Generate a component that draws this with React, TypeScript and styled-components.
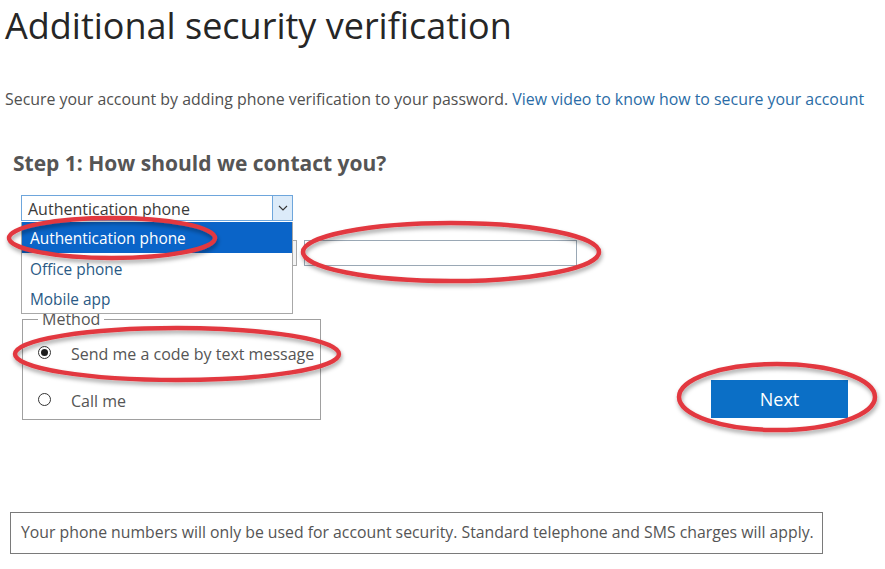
import React from "react";
import styled, { createGlobalStyle } from "styled-components";

const GlobalStyle = createGlobalStyle`
  html, body { margin: 0; padding: 0; background: #ffffff; }
  body { font-family: "Open Sans", "Noto Sans", sans-serif; }
  * { box-sizing: border-box; }
`;

const Page = styled.div`
  position: relative;
  width: 885px;
  height: 569px;
  overflow: hidden;
  background: #ffffff;
`;

const Title = styled.h1`
  margin: 0;
  padding-left: 5px;
  font: 400 36px/52px "Open Sans", sans-serif;
  color: #262626;
  white-space: nowrap;
`;

const Intro = styled.p`
  margin: 37px 0 0;
  padding-left: 5px;
  font: 400 15.9px/20px "Open Sans", sans-serif;
  color: #505050;
  white-space: nowrap;
`;

const Link = styled.a`
  color: #2a6ca6;
  text-decoration: none;
`;

const StepHeading = styled.h2`
  margin: 40px 0 0;
  padding-left: 13px;
  font: 700 21px/28px "Open Sans", sans-serif;
  color: #555555;
  white-space: nowrap;
`;

const Form = styled.div`
  margin-top: 18px;
  padding-left: 21px;
  display: flex;
  flex-direction: column;
`;

const SelectBox = styled.div`
  position: relative;
  width: 272px;
  height: 26px;
  border: 1px solid #6ea6dc;
  display: flex;
  align-items: stretch;
  background: #fff;
  z-index: 3;
`;

const SelectText = styled.span`
  flex: 1;
  padding: 2px 0 0 6px;
  font: 400 16px/22px "Open Sans", sans-serif;
  color: #3a3a3a;
  white-space: nowrap;
  overflow: hidden;
`;

const ArrowBox = styled.span`
  width: 20px;
  display: flex;
  align-items: center;
  justify-content: center;
  background: #dcebf9;
  border-left: 1px solid #6ea6dc;
`;

const Dropdown = styled.ul`
  position: absolute;
  top: 26px;
  left: -1px;
  width: 272px;
  margin: 0;
  padding: 0;
  list-style: none;
  background: #ffffff;
  border: 1px solid #a8a8a8;
  border-top: none;
`;

const Option = styled.li<{ $active?: boolean }>`
  height: ${(p) => (p.$active ? "31px" : "30px")};
  display: flex;
  align-items: center;
  padding: 3px 0 0 8px;
  font: 400 15.4px/1 "Open Sans", sans-serif;
  color: ${(p) => (p.$active ? "#ffffff" : "#2a5a85")};
  background: ${(p) => (p.$active ? "#0a64c8" : "transparent")};
  white-space: nowrap;
`;

const PhoneRow = styled.div`
  margin-top: 19px;
  display: flex;
  gap: 7px;
`;

const CountrySelect = styled.div`
  width: 276px;
  height: 26px;
  border: 1px solid #a9a9a9;
  background: #f4f4f4;
`;

const PhoneInput = styled.input`
  width: 273px;
  height: 26px;
  margin: 0;
  border: 1px solid #9aa8b5;
  background: #ffffff;
  padding: 0 6px;
  font: 400 15px "Open Sans", sans-serif;
  outline: none;
`;

const MethodRow = styled.div`
  margin-top: 45px;
  width: 827px;
  display: flex;
  align-items: flex-end;
`;

const Fieldset = styled.fieldset`
  margin: 0 0 0 1px;
  padding: 0 0 0 15px;
  width: 299px;
  min-width: 0;
  border: 1px solid #a0a0a0;
`;

const Legend = styled.legend`
  padding: 0 4px;
  font: 400 16px/16px "Open Sans", sans-serif;
  color: #555555;
`;

const RadioRow = styled.label<{ $first?: boolean }>`
  height: 40px;
  margin-top: ${(p) => (p.$first ? "5px" : "7px")};
  display: flex;
  align-items: center;
`;

const Radio = styled.span<{ $checked?: boolean }>`
  width: 13px;
  height: 13px;
  border-radius: 50%;
  border: 1px solid #333333;
  display: grid;
  place-items: center;
  background: #fff;
  &::after {
    content: "";
    width: 7px;
    height: 7px;
    border-radius: 50%;
    background: #1e1e1e;
    display: ${(p) => (p.$checked ? "block" : "none")};
  }
`;

const RadioLabel = styled.span`
  margin-left: 20px;
  padding-top: 3px;
  font: 400 16px/1 "Open Sans", sans-serif;
  color: #555555;
  white-space: nowrap;
`;

const NextButton = styled.button`
  margin: 0 0 2px auto;
  width: 137px;
  height: 38px;
  border: none;
  background: #0b6fc6;
  color: #ffffff;
  font: 400 18px/1 "Open Sans", sans-serif;
  padding: 0;
`;

const Notice = styled.div`
  margin: 92px 0 0 10px;
  width: 813px;
  height: 42px;
  border: 1px solid #7a7a7a;
  padding-left: 10px;
  display: flex;
  align-items: center;
  font: 400 15.8px/1 "Open Sans", sans-serif;
  color: #555555;
  white-space: nowrap;
`;

const Annotations = styled.svg`
  position: absolute;
  left: 0;
  top: 0;
  width: 885px;
  height: 569px;
  pointer-events: none;
  z-index: 10;
  overflow: visible;
`;

const marks = [
  { cx: 112, cy: 238, rx: 103, ry: 20 },
  { cx: 451, cy: 252, rx: 148, ry: 29 },
  { cx: 177, cy: 354, rx: 162, ry: 26 },
  { cx: 777, cy: 397, rx: 98, ry: 33 },
];

export default function App() {
  return (
    <>
      <GlobalStyle />
      <Page>
        <Title>Additional security verification</Title>
        <Intro>
          Secure your account by adding phone verification to your password.{" "}
          <Link href="#">View video to know how to secure your account</Link>
        </Intro>
        <StepHeading>Step 1: How should we contact you?</StepHeading>
        <Form>
          <SelectBox>
            <SelectText>Authentication phone</SelectText>
            <ArrowBox>
              <svg width="10" height="6" viewBox="0 0 10 6">
                <path d="M1 1l4 4 4-4" fill="none" stroke="#333" strokeWidth="1.1" />
              </svg>
            </ArrowBox>
            <Dropdown>
              <Option $active>Authentication phone</Option>
              <Option>Office phone</Option>
              <Option>Mobile app</Option>
            </Dropdown>
          </SelectBox>
          <PhoneRow>
            <CountrySelect />
            <PhoneInput type="text" />
          </PhoneRow>
          <MethodRow>
            <Fieldset>
              <Legend>Method</Legend>
              <RadioRow $first>
                <Radio $checked />
                <RadioLabel>Send me a code by text message</RadioLabel>
              </RadioRow>
              <RadioRow>
                <Radio />
                <RadioLabel>Call me</RadioLabel>
              </RadioRow>
            </Fieldset>
            <NextButton>Next</NextButton>
          </MethodRow>
        </Form>
        <Notice>
          Your phone numbers will only be used for account security. Standard telephone and SMS charges will apply.
        </Notice>
        <Annotations viewBox="0 0 885 569">
          <defs>
            <filter id="shadow" x="-10%" y="-30%" width="120%" height="160%">
              <feDropShadow dx="1" dy="3" stdDeviation="2" floodColor="#000" floodOpacity="0.35" />
            </filter>
          </defs>
          {marks.map((m, i) => (
            <ellipse
              key={i}
              cx={m.cx}
              cy={m.cy}
              rx={m.rx}
              ry={m.ry}
              fill="none"
              stroke="#e2383f"
              strokeWidth={4.5}
              filter="url(#shadow)"
            />
          ))}
        </Annotations>
      </Page>
    </>
  );
}
